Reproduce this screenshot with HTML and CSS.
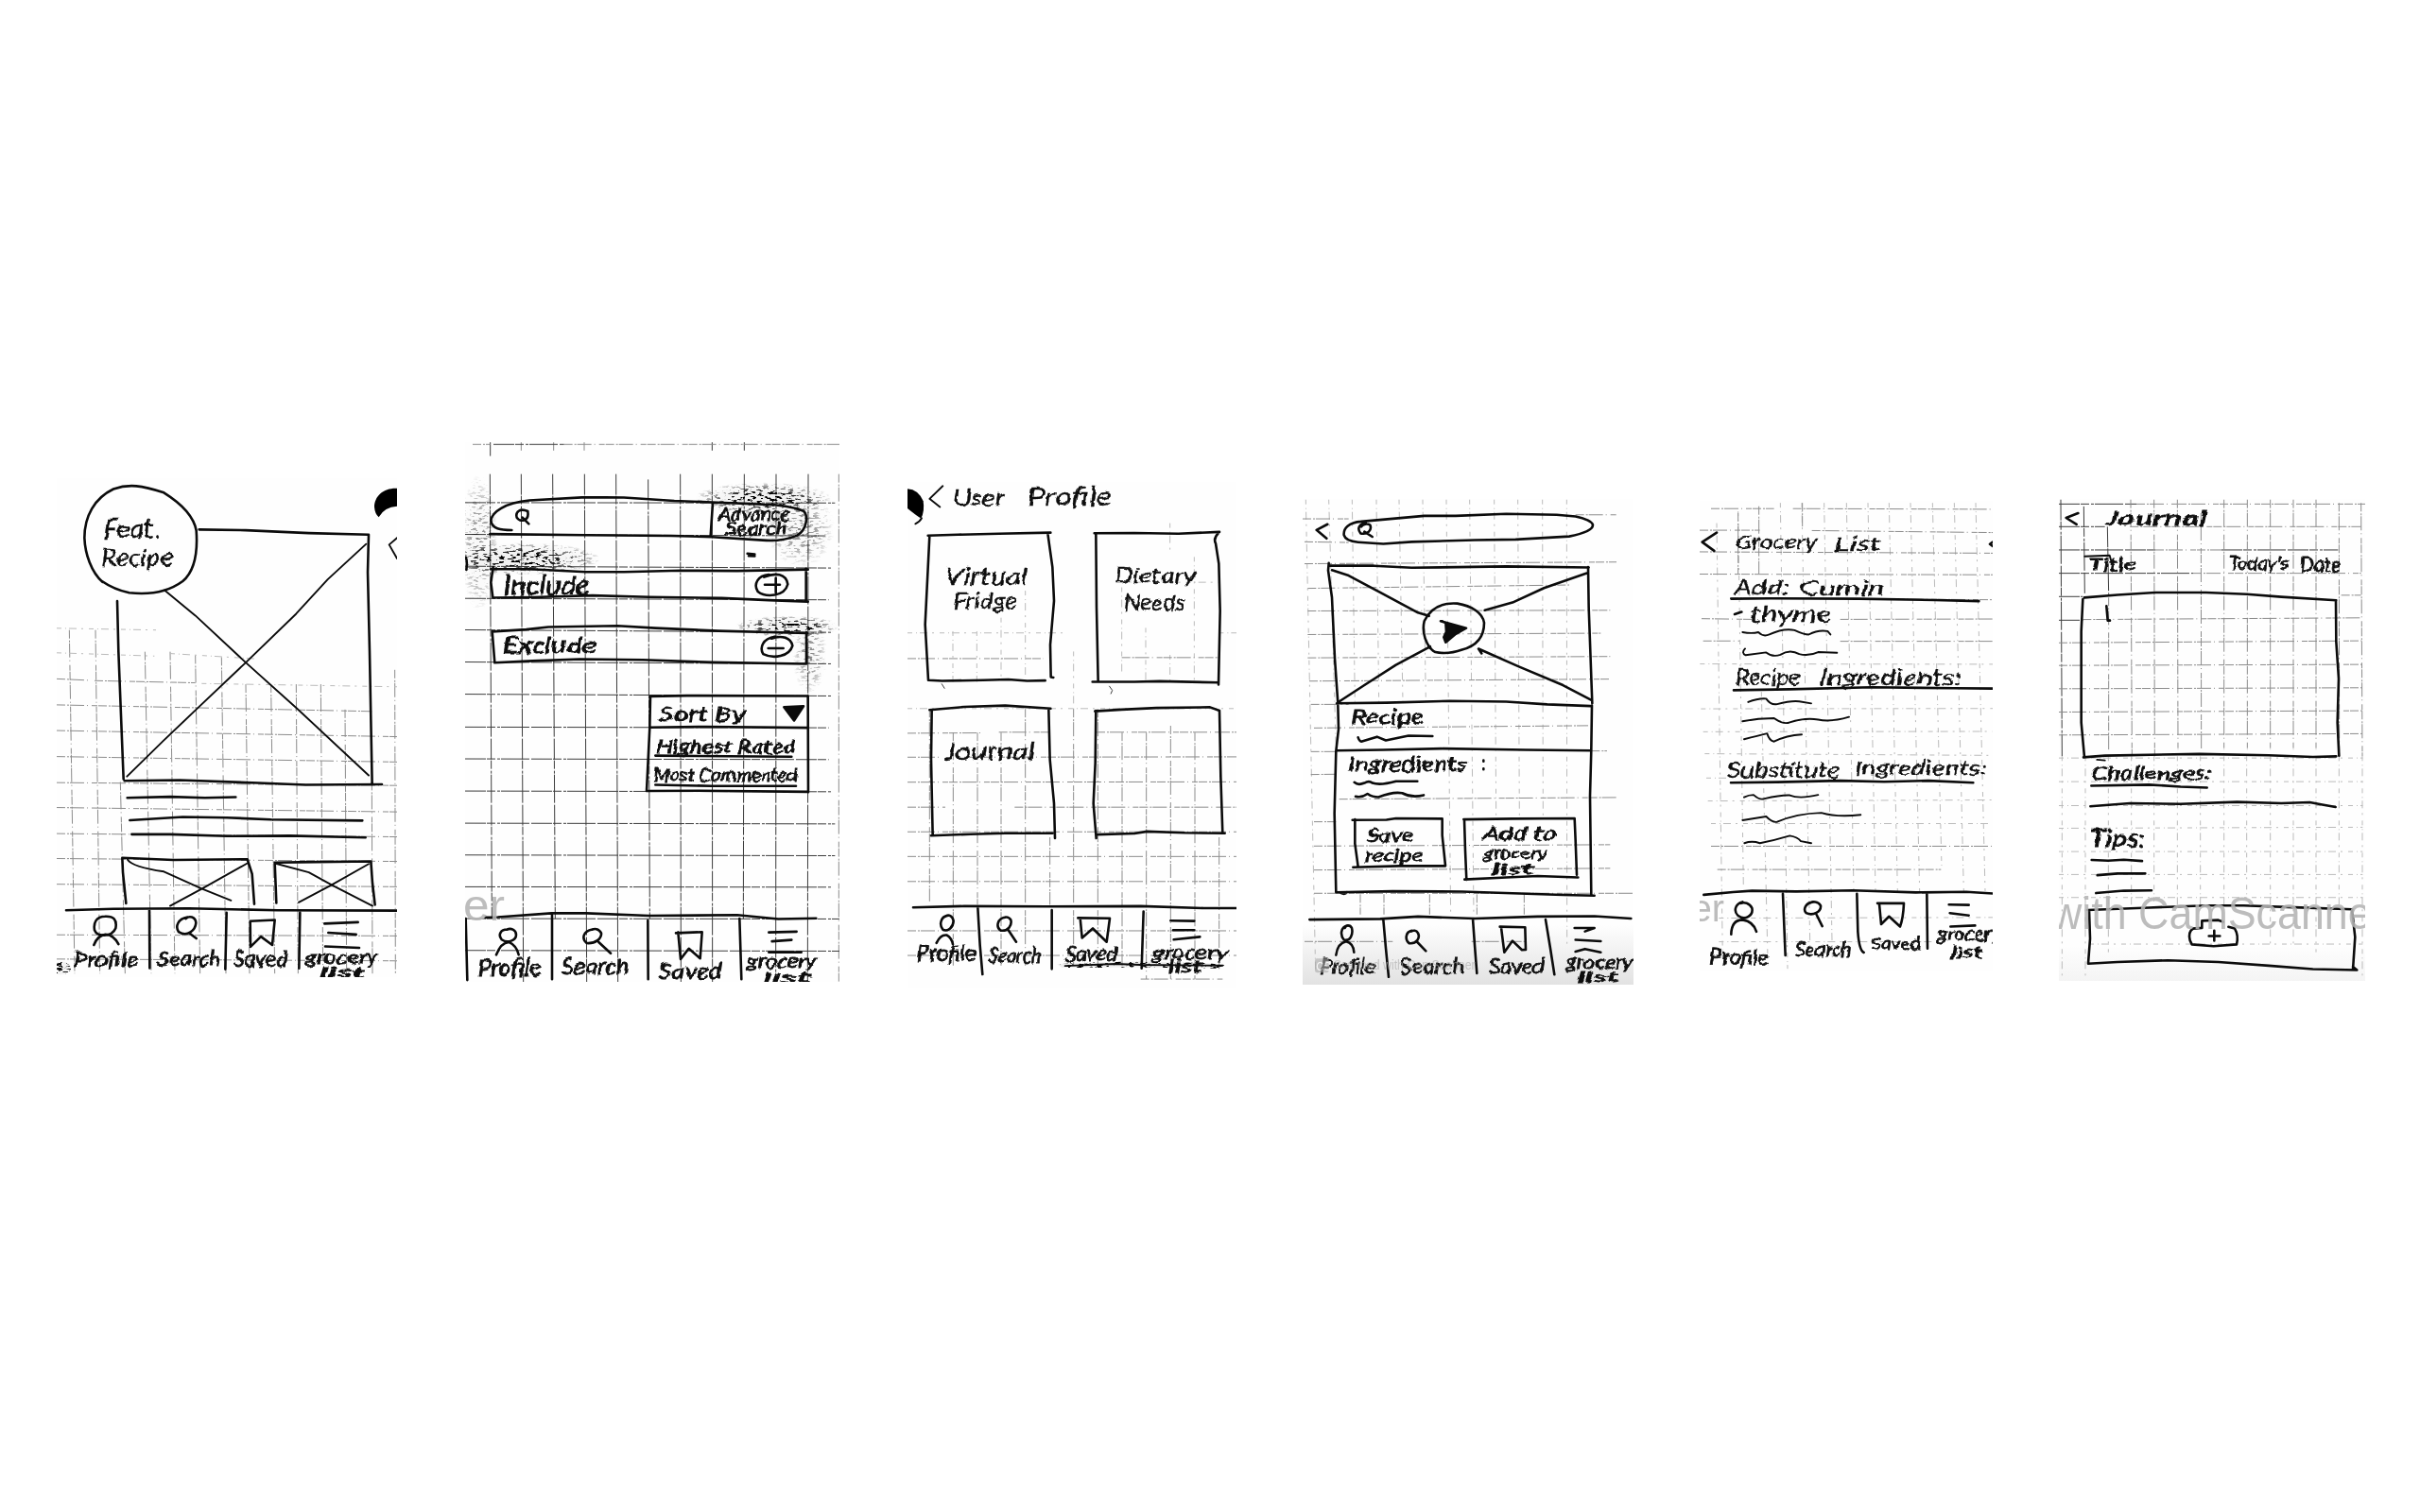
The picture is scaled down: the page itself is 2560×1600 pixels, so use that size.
FILE: index.html
```html
<!DOCTYPE html>
<html lang="en">
<head>
<meta charset="utf-8">
<title>Recipe app wireframes</title>
<link rel="stylesheet" href="styles.css">
</head>
<body>
<main class="board">

<svg class="sheet home" viewBox="60 120 1080 1380" preserveAspectRatio="none">
  <defs>
    <filter id="grain" x="0" y="0" width="1" height="1">
      <feTurbulence type="fractalNoise" baseFrequency=".05 .16" numOctaves="3" seed="4" result="n"/>
      <feColorMatrix in="n" type="matrix" values="0 0 0 0 0  0 0 0 0 0  0 0 0 0 0  10 0 0 0 -5.4" result="m"/>
      <feComposite in="SourceGraphic" in2="m" operator="arithmetic" k1="1.2" k2=".06"/>
    </filter>
    <filter id="wobble" x="-.02" y="-.1" width="1.04" height="1.2">
      <feTurbulence type="fractalNoise" baseFrequency=".03" numOctaves="2" seed="9"/>
      <feDisplacementMap in="SourceGraphic" scale="16" xChannelSelector="R" yChannelSelector="G"/>
    </filter>
    <radialGradient id="smudge"><stop offset="0" stop-color="#000"/><stop offset=".45" stop-color="#000" stop-opacity=".7"/><stop offset="1" stop-color="#000" stop-opacity="0"/></radialGradient>
    <linearGradient id="shade" x1="0" y1="0" x2="0" y2="1"><stop offset="0" stop-color="#e2e2e2" stop-opacity="0"/><stop offset="1" stop-color="#e2e2e2"/></linearGradient>
  </defs>
  <path class="grid" d="M100 540L117 1490M183 540L197 1490M340 600L360 1490M420 600L435 1490M500 610L515 1490M583 615L597 1490M660 690L672 1490M740 690L752 1490M820 690L826 1490M898 690L905 1490M975 760L980 1490M1133 650L1135 1490M262 960L277 1490M1060 960L1062 1490"/>
  <path class="grid faint" d="M60 535L375 540M60 603L370 612M420 605L700 620M520 688L1140 697"/>
  <path class="grid" d="M60 675L160 679M180 680L500 686M60 747L1060 765M60 818L1140 835M60 890L1140 905M60 962L1140 970M60 1031L1140 1043M60 1103L1140 1112M60 1172L1140 1180M60 1243L1140 1250M60 1383L1140 1386M60 1450L1140 1455"/>
  <ellipse class="smear" cx="75" cy="1475" rx="30" ry="18"/>
  <path class="ink" d="M205 407C170 380 150 330 148 285C148 225 180 175 240 150C290 135 330 140 400 160C455 190 495 225 503 265C508 325 500 375 460 405C410 437 350 443 290 437C250 430 220 415 200 403M512 262L660 264L860 272L1050 276M1050 276L1047 380L1053 600L1061 968M252 460L256 600L266 820L272 952M275 957L450 955L700 963L850 968L1092 967"/>
  <path class="pen" d="M402 430L500 500L660 630L820 755L1050 942M1042 302L920 400L820 495L660 630L500 762L400 845L283 945"/>
  <path class="ink" d="M284 1004L420 1001L530 1004L628 1002M292 1066L460 1057L600 1059L740 1064L1030 1067M298 1105L420 1105L600 1110L800 1109L1040 1114"/>
  <path class="ink" d="M280 1296L270 1210L268 1170L430 1176L665 1174L680 1215L687 1298M757 1295L752 1183L830 1182L1057 1180L1062 1240L1070 1300"/>
  <path class="pen" d="M285 1175Q300 1195 400 1208L520 1255L613 1288M665 1185L520 1256L420 1303M752 1185L860 1210L935 1246L1062 1303M1050 1187L930 1246L828 1293"/>
  <path class="ink" d="M90 1315L240 1311L480 1310L760 1315L1140 1316M354 1315L355 1475M599 1322L595 1478M832 1322L829 1476"/>
  <path class="ink" d="M214 1332C185 1332 176 1350 180 1370C188 1390 235 1390 247 1365C252 1340 240 1331 214 1332M178 1411Q190 1384 215 1382Q240 1382 256 1409M475 1334C445 1338 435 1360 447 1375C475 1390 500 1370 502 1350C500 1332 480 1330 470 1338M480 1378L503 1393M674 1345L675 1416L708 1388L744 1411L752 1342L674 1345M910 1352L1016 1348M922 1377L1010 1382M912 1415L1020 1419"/>
  <path d="M1140 148C1100 146 1068 168 1068 200Q1070 220 1082 228Q1100 200 1140 198Z"/>
  <path class="pen" d="M1140 285L1115 304L1140 342"/>
  <g class="hand">
    <text x="208" y="288" font-size="78" textLength="180" lengthAdjust="spacingAndGlyphs">Feat.</text>
    <text x="202" y="364" font-size="64" textLength="228" lengthAdjust="spacingAndGlyphs">Recipe</text>
  </g>
  <g class="hand heavy">
    <text x="112" y="1471" font-size="56" textLength="208" lengthAdjust="spacingAndGlyphs">Profile</text>
    <text x="382" y="1469" font-size="56" textLength="200" lengthAdjust="spacingAndGlyphs">Search</text>
    <text x="622" y="1471" font-size="58" textLength="172" lengthAdjust="spacingAndGlyphs">Saved</text>
    <text x="850" y="1464" font-size="48" textLength="228" lengthAdjust="spacingAndGlyphs">grocery</text>
    <text x="895" y="1499" font-size="40" textLength="145" lengthAdjust="spacingAndGlyphs">list</text>
  </g>
</svg>

<svg class="sheet search" viewBox="36 22 1188 1493" preserveAspectRatio="none">
  <path class="grid strong" d="M116 22V60M820 22V45M922 22V45M115 110L121 1340M214 110L221 1515M314 110L322 1340M415 110L422 1515M515 110L521 1515M617 125L622 1340M719 110L721 1515M820 110L821 1515M922 110L919 1340M1023 110L1022 1515M1125 110L1123 1515"/>
  <path class="grid" d="M60 28H116M350 28H1224M214 22V45M317 22V45M414 22V45M1222 110V1515"/>
  <path class="grid strong" d="M126 28H350M36 189L1210 190M36 277L1180 281M36 365L1200 370M36 454L1190 458M36 541L1200 548M36 630L1200 635M36 719L1200 724M36 810L1190 812M36 898L1190 900M36 987L1200 989M36 1076L1210 1078M36 1164L1210 1166M36 1252L1200 1253M36 1340L1224 1341M36 1428L1224 1430"/>
  <g filter="url(#grain)" fill="url(#smudge)">
    <ellipse cx="980" cy="178" rx="220" ry="45"/>
    <ellipse cx="220" cy="345" rx="250" ry="45"/>
    <ellipse cx="1060" cy="532" rx="170" ry="30"/>
    <ellipse cx="1130" cy="610" rx="55" ry="110" opacity=".4"/>
    <ellipse cx="1100" cy="260" rx="110" ry="110" opacity=".4"/>
    <ellipse cx="80" cy="300" rx="60" ry="190" opacity=".4"/>
  </g>
  <path class="ink" d="M184 265C150 265 120 262 118 238C122 215 160 190 240 183L420 174L540 175L700 184L820 188L980 194Q1060 195 1110 212C1125 225 1122 262 1090 280Q1040 298 980 293L820 284L690 281L420 279L115 276M822 190L815 282"/>
  <path class="ink" d="M125 367L118 410L124 452L250 451L440 446L620 450L850 453L1000 459L1124 463M118 373L240 373L420 381L540 381L720 377L900 378L1124 374M1118 372L1118 463M122 545L130 632L250 627L400 622L600 624L820 631L1118 635M122 546L230 540L300 533L520 530L640 536L840 544L1122 550M1119 548L1119 635"/>
  <path class="ink" d="M624 725L740 723L1124 724L1125 990M624 725L622 810L612 987L780 986L1122 989M622 811L800 809L1124 812M640 889L1072 892M640 970L820 973L1086 973"/>
  <path d="M1048 755L1110 752L1080 792Z" class="ink solid"/>
  <path class="ink" d="M1000 388C965 390 950 415 965 435C990 452 1050 450 1060 415C1055 385 1020 382 985 395M987 416H1035M1022 398V438M1020 560C980 565 970 590 982 608C1015 622 1065 615 1075 585C1070 562 1040 555 1008 565M998 592H1046M235 213C210 203 195 215 200 230C210 245 240 240 235 215M218 230L238 248"/>
  <path class="ink" d="M100 1337L140 1336L310 1325L420 1325L620 1332L900 1330L1030 1341L1150 1339M312 1330V1508M616 1345L617 1508M907 1340L913 1508M38 1340L43 1510M38 340Q44 350 40 375"/>
  <path class="ink" d="M170 1370C148 1370 140 1385 152 1398C172 1410 198 1400 198 1385C198 1370 180 1366 170 1370M135 1440Q150 1406 175 1405Q200 1415 206 1440M440 1370C410 1375 405 1395 422 1408C450 1410 470 1395 468 1380C460 1366 445 1368 440 1370M460 1405L498 1436M705 1380L788 1377L782 1450L746 1423L720 1452L712 1378M1000 1378L1088 1376M1010 1403L1072 1399M1000 1433H1103M932 330L955 332M936 336L955 337"/>
  <text class="mark" x="30" y="1345" font-size="122" textLength="132" lengthAdjust="spacingAndGlyphs">er</text>
  <g class="hand heavy">
    <text x="840" y="239" font-size="50" textLength="226" lengthAdjust="spacingAndGlyphs">Advance</text>
    <text x="862" y="278" font-size="48" textLength="198" lengthAdjust="spacingAndGlyphs">Search</text>
    <text x="158" y="442" font-size="70" textLength="274" lengthAdjust="spacingAndGlyphs">Include</text>
    <text x="155" y="604" font-size="60" textLength="298" lengthAdjust="spacingAndGlyphs">Exclude</text>
    <text x="650" y="794" font-size="56" textLength="276" lengthAdjust="spacingAndGlyphs">Sort By</text>
    <text x="642" y="881" font-size="50" textLength="444" lengthAdjust="spacingAndGlyphs">Highest Rated</text>
    <text x="634" y="960" font-size="50" textLength="456" lengthAdjust="spacingAndGlyphs">Most Commented</text>
    <text x="74" y="1500" font-size="66" textLength="206" lengthAdjust="spacingAndGlyphs">Profile</text>
    <text x="342" y="1495" font-size="60" textLength="214" lengthAdjust="spacingAndGlyphs">Search</text>
    <text x="650" y="1507" font-size="60" textLength="202" lengthAdjust="spacingAndGlyphs">Saved</text>
    <text x="930" y="1476" font-size="48" textLength="222" lengthAdjust="spacingAndGlyphs">grocery</text>
    <text x="980" y="1517" font-size="42" textLength="155" lengthAdjust="spacingAndGlyphs">list</text>
  </g>
</svg>

<svg class="sheet profile" viewBox="60 28 1044 1497" preserveAspectRatio="none">
  <path class="grid faint" d="M204 470V620M280 470V620M357 430V620M434 350V620M740 340V600M816 460V620M893 150V240M893 540V620M970 250V620M60 475H560M1048 475H1104M60 699H1104M740 325H1048M587 530V700"/>
  <path class="grid" d="M60 551H490M740 548H1048M60 772L300 771M350 769H510M660 769H1104M60 843H170M240 843L1104 842M60 917L1104 916M60 991H180M400 991H1104M60 1064H1104M60 1137H1104M60 1211H1104M60 1357H1104M60 1430H1104M130 700V1270M205 770V1460M282 770V1280M357 770V1460M434 700V1460M512 1080V1280M587 700V1460M664 700V1460M741 770V1460M818 770V1500M895 750V1500M972 770V1500M1049 1080V1470M800 1500H1060"/>
  <path d="M60 48Q95 50 110 85Q115 115 103 136Q85 125 60 106Z"/>
  <path class="pen" d="M172 40L130 78L163 102M85 152Q100 145 105 135"/>
  <path class="grid strong" d="M168 625L178 640M700 632L710 645L705 656"/>
  <path class="ink" d="M125 187L220 184L350 181L514 178M130 187L124 300L116 450L126 615M505 180L520 280L525 380L513 510L515 606L523 607M126 615L170 617L300 615L380 613L440 617L497 616M653 180L780 179L920 181L1050 176M658 180L660 400L665 618M1046 180Q1030 195 1038 210L1048 270L1052 410L1047 628M647 620L780 620L860 618L1047 622"/>
  <path class="ink" d="M130 703L240 694L370 690L514 699M137 705L135 850L140 1075M508 703L512 850L525 980L528 1083M135 1075L260 1071L370 1068L520 1068M655 707L740 702L850 697L1020 695L1050 705M658 705L656 860L650 980L659 1083M1050 705L1054 900L1060 1068M660 1072L780 1069L820 1063L940 1067L1067 1068"/>
  <path class="ink" d="M78 1288L240 1284L500 1285L800 1284L1000 1290L1104 1290M283 1288L290 1400L298 1486M518 1296L518 1470M809 1300L803 1468"/>
  <path class="ink" d="M186 1312C165 1316 160 1340 172 1353C190 1362 205 1345 206 1328C203 1312 190 1308 182 1314M152 1393Q165 1367 185 1370Q200 1378 204 1397M370 1317C345 1320 340 1345 355 1356C380 1360 392 1340 388 1325C382 1316 375 1315 366 1318M380 1355L405 1390M601 1319L702 1320L692 1390L648 1350L614 1378L608 1320M895 1327L970 1328M903 1355H970M905 1383L988 1375"/>
  <path class="band" filter="url(#grain)" d="M535 1456L660 1450L800 1448L1000 1452L1066 1458L1050 1468L800 1465L550 1466Z"/>
  <path class="pen" d="M560 1461L720 1455L800 1458L1060 1460"/>
  <g class="hand">
    <text x="206" y="98" font-size="66" textLength="162" lengthAdjust="spacingAndGlyphs">User</text>
    <text x="440" y="98" font-size="76" textLength="268" lengthAdjust="spacingAndGlyphs">Profile</text>
    <text x="178" y="332" font-size="70" textLength="264" lengthAdjust="spacingAndGlyphs">Virtual</text>
    <text x="206" y="402" font-size="62" textLength="202" lengthAdjust="spacingAndGlyphs">Fridge</text>
    <text x="718" y="328" font-size="64" textLength="258" lengthAdjust="spacingAndGlyphs">Dietary</text>
    <text x="746" y="408" font-size="62" textLength="196" lengthAdjust="spacingAndGlyphs">Needs</text>
    <text x="176" y="850" font-size="72" textLength="288" lengthAdjust="spacingAndGlyphs">Journal</text>
  </g>
  <g class="hand heavy">
    <text x="90" y="1448" font-size="62" textLength="188" lengthAdjust="spacingAndGlyphs">Profile</text>
    <text x="318" y="1452" font-size="62" textLength="166" lengthAdjust="spacingAndGlyphs">Search</text>
    <text x="560" y="1448" font-size="58" textLength="166" lengthAdjust="spacingAndGlyphs">Saved</text>
    <text x="836" y="1440" font-size="56" textLength="240" lengthAdjust="spacingAndGlyphs">grocery</text>
    <text x="888" y="1480" font-size="46" textLength="108" lengthAdjust="spacingAndGlyphs">list</text>
  </g>
</svg>

<svg class="sheet recipe" viewBox="54 78 1050 1440" preserveAspectRatio="none">
  <rect x="54" y="1340" width="1050" height="178" fill="url(#shade)"/>
  <path class="grid faint" d="M64 80L95 1480M137 80L160 820M211 80L220 680M288 80L296 680M360 80L372 680M435 80L445 680M510 80L524 1320M584 80L597 1320M662 80L668 1020M737 80L742 1020M815 80L817 1020M892 80L893 1400"/>
  <path class="grid" d="M54 137H200M920 125H1050M60 205L200 207M60 270L1050 265M70 343L900 333M70 410L1030 408M70 480L1000 476M70 549L1030 545M75 618L1030 612M80 687H200M90 757L960 750M80 827H160M970 825H1020M80 895L160 894M170 968L1050 963M90 1035H160M90 1107L1030 1103M90 1178L1030 1173M90 1247H1104M60 1390H340M590 1390H760M237 1250V1310M312 1250V1310M457 1250V1310M607 1250V1310M757 1250V1310"/>
  <path class="ink" d="M133 153L98 170L130 195M255 150C235 150 225 165 238 180C260 185 275 170 268 155C260 150 245 152 240 160M250 175L275 190M240 145C200 148 183 165 185 185Q190 203 230 206L310 211L400 205L600 200L730 198L900 189Q975 175 975 155Q970 140 920 130L860 125L700 122L540 128L440 128L240 145"/>
  <path class="ink" d="M137 268L135 290L147 370L156 550L166 684M137 276L280 276L400 282L700 278L962 281M960 280L962 400L973 684M162 684L320 682L520 677L700 679L830 687L968 692M147 289L200 305L300 355L420 415L455 425M958 297L820 342L720 385L632 408M166 681L250 630L350 570L458 516M972 675L880 630L740 575L612 522L622 536"/>
  <path class="ink" d="M458 520Q430 480 440 440C460 400 500 385 545 388C590 395 625 415 630 445C630 490 600 515 560 525Q515 540 475 532Q460 525 458 515"/>
  <path class="ink solid" d="M492 440L573 461L540 478L508 503L502 488L510 472L508 445Z"/>
  <path class="ink" d="M166 690L168 760L160 825L155 1010L160 1244M160 824L310 822L500 818L760 822L970 824M972 690L970 820L966 960L970 1254M160 1244L340 1241L560 1242L720 1247L880 1252L980 1254M175 1246Q188 1252 195 1244M230 785Q235 800 245 796L290 783L318 794L390 780L466 781M218 918Q230 928 250 920Q265 912 275 920Q300 928 350 915L418 915M222 960Q240 965 260 952Q275 962 295 962Q340 945 370 950Q400 965 438 956"/>
  <path class="ink" d="M212 1030L320 1029L350 1025L497 1026L497 1075L507 1165M220 1028L220 1100L230 1168M214 1170L360 1166L507 1166M565 1028L720 1026L917 1025L920 1090L924 1192M567 1028L570 1120L574 1207M568 1206L700 1200L800 1196L928 1200"/>
  <path class="ink" d="M76 1325L300 1323L420 1316L600 1322L800 1316L980 1315L1096 1322M310 1325L318 1410L327 1495M594 1322L600 1400L607 1484M825 1325L840 1410L853 1488"/>
  <path class="ink" d="M195 1343C175 1348 172 1370 185 1385C205 1390 215 1370 210 1350C205 1340 190 1340 188 1350M160 1430Q165 1395 192 1390Q215 1395 217 1422M400 1358C380 1362 378 1385 392 1395C415 1398 428 1380 420 1365C415 1356 405 1356 398 1360M418 1392L445 1418M680 1346L760 1348L762 1414L750 1415L720 1388L694 1422L684 1348M917 1350L980 1350L950 1360M920 1385L1000 1389M920 1420L950 1412L1000 1422M628 853V856M628 877V880"/>
  <g class="hand heavy">
    <text x="208" y="746" font-size="60" textLength="232" lengthAdjust="spacingAndGlyphs">Recipe</text>
    <text x="198" y="884" font-size="60" textLength="378" lengthAdjust="spacingAndGlyphs">Ingredients</text>
    <text x="258" y="1096" font-size="54" textLength="148" lengthAdjust="spacingAndGlyphs">Save</text>
    <text x="252" y="1154" font-size="54" textLength="184" lengthAdjust="spacingAndGlyphs">recipe</text>
    <text x="626" y="1088" font-size="54" textLength="234" lengthAdjust="spacingAndGlyphs">Add to</text>
    <text x="628" y="1146" font-size="50" textLength="202" lengthAdjust="spacingAndGlyphs">grocery</text>
    <text x="654" y="1190" font-size="42" textLength="134" lengthAdjust="spacingAndGlyphs">list</text>
    <text x="108" y="1486" font-size="66" textLength="178" lengthAdjust="spacingAndGlyphs">Profile</text>
    <text x="364" y="1486" font-size="66" textLength="204" lengthAdjust="spacingAndGlyphs">Search</text>
    <text x="646" y="1484" font-size="62" textLength="174" lengthAdjust="spacingAndGlyphs">Saved</text>
    <text x="890" y="1470" font-size="54" textLength="212" lengthAdjust="spacingAndGlyphs">grocery</text>
    <text x="926" y="1511" font-size="44" textLength="132" lengthAdjust="spacingAndGlyphs">list</text>
  </g>
  <g class="scan"><rect x="93" y="1440" width="44" height="42" rx="6"/><text x="97" y="1475" font-size="34" fill="#fff">CS</text><text x="152" y="1474" font-size="42" textLength="450" lengthAdjust="spacingAndGlyphs">Scanned with CamScanner</text></g>
</svg>

<svg class="sheet grocery" viewBox="54 84 930 1394" preserveAspectRatio="none">
  <path class="grid faint" d="M108 150L127 1440M176 115L193 1230M310 90L333 1470M378 90L405 1440M449 90L475 1440M520 90L543 1240M588 90L612 1240M655 90L682 1240M723 90L752 1240M793 90L822 1170M862 90L892 1240M930 90L960 1240M250 650L270 1440"/>
  <path class="grid faint" d="M55 567L984 568M58 700L984 699M65 768L984 767M70 833L984 838M75 905H150M80 973L984 970M90 1040L984 1040M115 1320L984 1318M115 1390L800 1390"/>
  <path class="grid" d="M90 107H290M350 107L984 109M54 171H245M410 172L984 178M54 235L984 239M54 301L984 303M150 372L984 377M60 433L220 435M500 435L984 434M65 499L180 499M500 500L984 500M90 1107L984 1107M110 1176L820 1176M242 100V300M176 120V300M380 90V160"/>
  <path class="ink" d="M108 178L62 206L100 232M154 374L280 373L560 374L800 378L940 381M162 645L340 642L600 636L860 639L984 640M153 919L300 917L500 913L640 916L780 913L922 919M165 420L187 413"/>
  <path class="pen" d="M190 473Q220 478 240 473Q255 488 275 480Q320 460 355 467Q385 480 400 480Q430 465 460 470L469 480M198 522Q185 535 200 541L265 533Q285 548 310 540Q340 522 370 538Q400 545 430 532L490 534M208 680Q240 668 265 670Q280 690 300 686Q345 675 370 678L408 684M190 737Q240 728 290 728Q320 748 340 740Q390 725 430 732Q470 740 528 724M195 790Q240 780 268 773Q275 795 290 797Q330 778 378 776M195 962Q210 955 225 955Q245 972 260 966Q310 955 340 956Q370 968 430 955M190 1030L265 1019Q285 1038 300 1035Q360 1010 440 1008Q490 1022 565 1014M196 1098Q220 1090 245 1098Q290 1090 340 1076Q365 1080 375 1092L408 1098"/>
  <path class="ink" d="M67 1251L160 1243L220 1239L360 1241L540 1238L740 1244L900 1242L984 1247M318 1248L322 1340L326 1430M553 1248L556 1360Q560 1415 575 1422M775 1246L777 1410"/>
  <path class="ink" d="M190 1272C165 1278 162 1300 175 1312C200 1330 225 1310 220 1290C212 1275 195 1272 185 1276M154 1368Q155 1325 190 1325Q225 1330 234 1360M415 1272C388 1275 382 1295 392 1305C415 1315 440 1300 438 1283C430 1270 412 1270 405 1275M425 1310L443 1344M618 1276L702 1276Q700 1320 690 1345L655 1315L630 1338L624 1278M845 1280L908 1281M848 1305L908 1312M850 1345L928 1342M984 206L975 212L984 218"/>
  <text class="mark" x="26" y="1329" font-size="112" textLength="106" lengthAdjust="spacingAndGlyphs">er</text>
  <g class="hand">
    <text x="164" y="226" font-size="58" textLength="264" lengthAdjust="spacingAndGlyphs">Grocery</text>
    <text x="480" y="232" font-size="58" textLength="150" lengthAdjust="spacingAndGlyphs">List</text>
    <text x="162" y="362" font-size="60" textLength="178" lengthAdjust="spacingAndGlyphs">Add:</text>
    <text x="370" y="364" font-size="58" textLength="272" lengthAdjust="spacingAndGlyphs">Cumin</text>
    <text x="214" y="442" font-size="64" textLength="260" lengthAdjust="spacingAndGlyphs">thyme</text>
    <text x="168" y="630" font-size="62" textLength="206" lengthAdjust="spacingAndGlyphs">Recipe</text>
    <text x="434" y="630" font-size="62" textLength="452" lengthAdjust="spacingAndGlyphs">Ingredients:</text>
    <text x="142" y="904" font-size="62" textLength="356" lengthAdjust="spacingAndGlyphs">Substitute</text>
    <text x="546" y="896" font-size="58" textLength="420" lengthAdjust="spacingAndGlyphs">Ingredients:</text>
  </g>
  <g class="hand heavy">
    <text x="84" y="1454" font-size="62" textLength="188" lengthAdjust="spacingAndGlyphs" transform="rotate(2 84 1454)">Profile</text>
    <text x="356" y="1432" font-size="60" textLength="180" lengthAdjust="spacingAndGlyphs">Search</text>
    <text x="598" y="1414" font-size="56" textLength="158" lengthAdjust="spacingAndGlyphs">Saved</text>
    <text x="810" y="1386" font-size="52" textLength="200" lengthAdjust="spacingAndGlyphs">grocery</text>
    <text x="850" y="1440" font-size="48" textLength="104" lengthAdjust="spacingAndGlyphs">list</text>
  </g>
</svg>

<svg class="sheet journal" viewBox="54 78 972 1427" preserveAspectRatio="none">
  <rect x="54" y="1400" width="972" height="105" fill="url(#shade)" opacity=".35"/>
  <path class="grid strong" d="M60 80L64 840M133 100L136 360M208 160L212 360M54 93H300M54 160H200M54 229H360M54 298H480M54 367H130M570 229H940M54 437H130"/>
  <path class="grid" d="M282 80L286 840M356 80L358 840M430 80L432 820M505 120L506 820M578 80L578 820M652 80L652 820M725 80L725 820M798 80L798 820M870 80L870 820M943 90L944 840M1013 90L1017 840M212 370V820M300 93H1026M280 160H1013M360 229H570M480 298H1013M950 363H1013M130 435L1013 430M54 504L1013 498M54 571L1018 568M54 640L1018 637M54 709L1018 705M54 777L1018 773"/>
  <path class="grid faint" d="M64 840V1490M138 840V1490M211 840V1420M284 840V1280M356 840V1270M430 840V1280M503 840V1280M578 840V1280M650 840V1260M725 840V1400M798 840V1400M870 840V1420M943 840V1280M1017 840V1490M54 845H1018M54 915H1018M54 986H1018M54 1053L1018 1050M54 1122H1018M54 1190H1018M54 1258H1018M150 1396H1018"/>
  <path class="ink" d="M115 120L77 134L110 153M135 370L240 362L360 355L520 355L650 360L760 368L934 378M130 375L125 470L125 740L135 843M933 378L934 500L942 610L938 740L943 838M132 843L200 838L500 833L720 837L860 842L934 840M205 395L209 438L216 438M157 927L340 924L440 930L524 933M154 988L280 979L440 981L620 975L760 979L850 976L890 983L932 990M158 1147L210 1149L260 1146L318 1150M176 1192L240 1187H328M172 1245L260 1238L348 1237"/>
  <path class="pen" d="M136 248L215 245L220 262M175 850L200 852"/>
  <path class="ink" d="M145 1295L340 1288L520 1282L640 1282L800 1287L985 1293M150 1295L153 1380L147 1453M984 1293L994 1375L987 1473M147 1454L240 1449L400 1444L560 1449L720 1460L860 1470L1000 1473L987 1463"/>
  <path class="ink" d="M508 1348L480 1350Q463 1360 470 1385L476 1397L545 1402L618 1397Q625 1370 612 1350L592 1345M508 1348V1327L560 1325L575 1330M530 1372H565M547 1356V1386"/>
  <text class="mark" x="30" y="1350" font-size="132" textLength="1016" lengthAdjust="spacingAndGlyphs">with CamScanne</text>
  <g class="hand heavy">
    <text x="200" y="156" font-size="60" textLength="324" lengthAdjust="spacingAndGlyphs">Journal</text>
    <text x="148" y="290" font-size="56" textLength="152" lengthAdjust="spacingAndGlyphs">Title</text>
    <text x="594" y="288" font-size="56" textLength="188" lengthAdjust="spacingAndGlyphs">Today's</text>
    <text x="820" y="294" font-size="58" textLength="126" lengthAdjust="spacingAndGlyphs">Date</text>
    <text x="156" y="909" font-size="56" textLength="382" lengthAdjust="spacingAndGlyphs">Challenges:</text>
    <text x="152" y="1107" font-size="68" textLength="178" lengthAdjust="spacingAndGlyphs">Tips:</text>
  </g>
</svg>

</main>
</body>
</html>
```
FILE: styles.css
```css
body {
  margin: 0;
  background: #fff;
}

.board {
  display: flex;
  align-items: flex-start;
  gap: 70px;
  box-sizing: border-box;
  width: 2560px;
  height: 1600px;
  padding: 468px 58px 0 60px;
}

.sheet {
  display: block;
  flex: none;
  overflow: hidden;
  background: #fefefe;
}

.home { width: 360px; height: 528px; margin: 38px 2px 0 0; }
.search { width: 396px; height: 571px; margin-right: 2px; }
.profile { width: 348px; height: 535px; margin-top: 42px; }
.recipe { width: 350px; height: 514px; margin-top: 60px; }
.grocery { width: 310px; height: 498px; margin-top: 62px; }
.journal { width: 324px; height: 510px; margin-top: 60px; }

.ink,
.pen,
.grid {
  fill: none;
  stroke: #0b0b0b;
  stroke-linecap: round;
  stroke-linejoin: round;
  vector-effect: non-scaling-stroke;
}

.ink { stroke-width: 2.6px; }
.pen { stroke-width: 1.9px; }
.ink.solid { fill: #0b0b0b; }
.band { fill: #111; }

.grid {
  stroke: #8c8c8c;
  stroke-width: 1px;
  stroke-linecap: butt;
  stroke-dasharray: 9 2 2 1 15 3 1 4 6 1;
}

.grid.strong { stroke: #3c3c3c; stroke-dasharray: 22 1 9 2 3 1 30 2; }
.grid.faint { stroke: #bbb; stroke-dasharray: 5 4 1 3 8 5 2 6; }

.smear { fill: #333; filter: url(#grain); }

.hand {
  fill: #0b0b0b;
  stroke: #0b0b0b;
  stroke-width: 1px;
  font-family: Lato, "Open Sans", sans-serif;
  font-style: italic;
  filter: url(#wobble);
}

.heavy { stroke-width: 2.2px; }

.mark,
.scan {
  fill: #b4b4b4;
  opacity: 0.88;
  font-family: "Liberation Sans", Roboto, sans-serif;
}

.scan { fill: #aaa; opacity: 0.6; }

text { white-space: pre; }
```
